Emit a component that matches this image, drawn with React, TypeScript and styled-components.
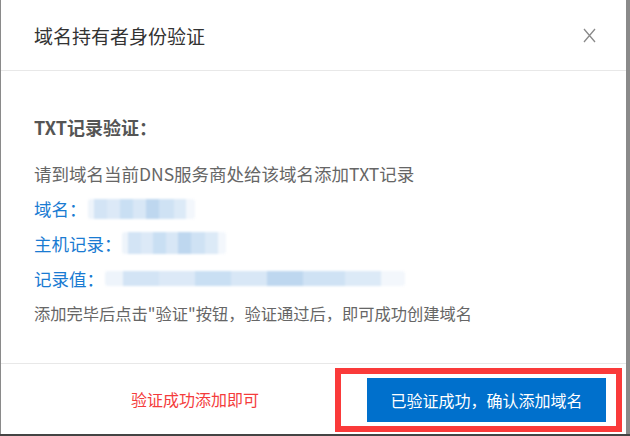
import React from "react";
import styled, { createGlobalStyle } from "styled-components";

const Global = createGlobalStyle`
  html, body { margin: 0; padding: 0; }
  body {
    width: 630px;
    height: 436px;
    overflow: hidden;
    background: #8a8a8a;
    font-family: "Microsoft YaHei", "Noto Sans CJK SC", "Noto Sans", sans-serif;
  }
`;

const Frame = styled.div`
  width: 630px;
  height: 436px;
  box-sizing: border-box;
  padding: 0 4px 0 1px;
  border-bottom: 2px solid #444;
`;

const Dialog = styled.div`
  position: relative;
  height: 434px;
  background: #fff;
  display: flex;
  flex-direction: column;
`;

const Header = styled.div`
  height: 71px;
  box-sizing: border-box;
  border-bottom: 1px solid #e8e8e8;
  display: flex;
  align-items: center;
  padding: 0 30px 0 33px;
`;

const Title = styled.div`
  flex: 1;
  font-size: 19px;
  color: #333;
`;

const Close = styled.button`
  border: 0;
  background: none;
  padding: 0;
  width: 14px;
  height: 16px;
  display: flex;
  align-items: center;
  justify-content: center;
  cursor: pointer;
`;

const Body = styled.div`
  flex: 1;
  padding: 39px 0 0 33px;
`;

const Heading = styled.div`
  font-size: 18px;
  font-weight: bold;
  color: #555;
  line-height: 34px;
  margin-bottom: 12px;
`;

const Line = styled.div<{ $tone?: "gray" | "blue"; $size?: number }>`
  display: flex;
  align-items: center;
  font-size: ${(p) => p.$size ?? 17.5}px;
  line-height: 35px;
  height: 35px;
  color: ${(p) => (p.$tone === "blue" ? "#1a7bd2" : "#666")};
  white-space: nowrap;
`;

const Redacted = styled.span<{ $w: number; $h: number; $dy: number; $dx: number }>`
  display: inline-block;
  width: ${(p) => p.$w}px;
  height: ${(p) => p.$h}px;
  margin-left: ${(p) => p.$dx}px;
  transform: translateY(${(p) => p.$dy}px);
  background: linear-gradient(
    90deg,
    #eef4fb 0 6%,
    #d3e4f5 6% 18%,
    #dce9f7 18% 30%,
    #c9dff3 30% 42%,
    #d8e7f6 42% 54%,
    #bed7ef 54% 66%,
    #cfe2f4 66% 80%,
    #dceaf7 80% 92%,
    #f3f7fc 92% 100%
  );
  filter: blur(0.8px);
  border-radius: 3px;
`;

const Footer = styled.div`
  height: 71px;
  box-sizing: border-box;
  border-top: 1px solid #e8e8e8;
  display: flex;
  align-items: center;
  padding: 0 20px 0 130px;
`;

const Hint = styled.div`
  font-size: 16px;
  color: #f43c3c;
`;

const Confirm = styled.button`
  margin-left: auto;
  width: 239px;
  height: 44px;
  border: 0;
  background: #0070cc;
  color: #fff;
  font-family: inherit;
  font-size: 16px;
  cursor: pointer;
  transform: translateY(1px);
`;

const Annotation = styled.div`
  position: absolute;
  left: 334px;
  top: 368px;
  width: 287px;
  height: 64px;
  box-sizing: border-box;
  border: 6px solid #fa3a3a;
  pointer-events: none;
`;

export default function App() {
  return (
    <>
      <Global />
      <Frame>
        <Dialog>
          <Header>
            <Title>域名持有者身份验证</Title>
            <Close aria-label="关闭">
              <svg width="13" height="15" viewBox="0 0 13 15">
                <path d="M1 1 L12 14 M12 1 L1 14" stroke="#8a8a8a" strokeWidth="1.3" fill="none" />
              </svg>
            </Close>
          </Header>
          <Body>
            <Heading>TXT记录验证：</Heading>
            <Line>请到域名当前DNS服务商处给该域名添加TXT记录</Line>
            <Line $tone="blue">
              域名：
              <Redacted $w={107} $h={20} $dx={1} $dy={0} />
            </Line>
            <Line $tone="blue">
              主机记录：
              <Redacted $w={104} $h={22} $dx={0} $dy={-1} />
            </Line>
            <Line $tone="blue">
              记录值：
              <Redacted $w={300} $h={15} $dx={1} $dy={0} />
            </Line>
            <Line $size={16.25}>添加完毕后点击"验证"按钮，验证通过后，即可成功创建域名</Line>
          </Body>
          <Footer>
            <Hint>验证成功添加即可</Hint>
            <Confirm>已验证成功，确认添加域名</Confirm>
          </Footer>
          <Annotation />
        </Dialog>
      </Frame>
    </>
  );
}
